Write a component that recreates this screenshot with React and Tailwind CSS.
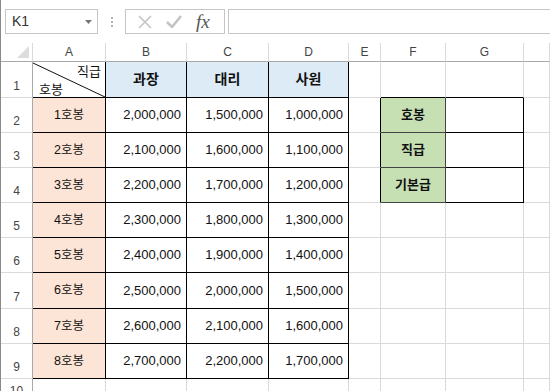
import React from "react";

const F = { fontFamily: '"Liberation Sans", "Noto Sans CJK KR", sans-serif' };

const cols = ["A", "B", "C", "D", "E", "F", "G", ""];
const data = [
  ["1호봉", "2,000,000", "1,500,000", "1,000,000"],
  ["2호봉", "2,100,000", "1,600,000", "1,100,000"],
  ["3호봉", "2,200,000", "1,700,000", "1,200,000"],
  ["4호봉", "2,300,000", "1,800,000", "1,300,000"],
  ["5호봉", "2,400,000", "1,900,000", "1,400,000"],
  ["6호봉", "2,500,000", "2,000,000", "1,500,000"],
  ["7호봉", "2,600,000", "2,100,000", "1,600,000"],
  ["8호봉", "2,700,000", "2,200,000", "1,700,000"],
];
const side = { 1: "호봉", 2: "직급", 3: "기본급" };

function RowHead({ n }) {
  return (
    <div className="border-r border-b border-r-[#a9a9a9] border-b-[#dadada] bg-white flex items-end justify-center pb-[2px] text-[12px] text-[#444]">
      {n}
    </div>
  );
}

function Gap({ cls = "" }) {
  return <div className={"border-r border-b border-[#dadada] " + cls}></div>;
}

export default function App() {
  return (
    <div className="w-[550px] h-[391px] overflow-hidden bg-white border-l border-[#8a8a8a]" style={F}>
      {/* formula bar */}
      <div className="h-[43px] flex items-start pt-[9px]">
        <div className="ml-[4px] w-[93px] h-[25px] border border-[#c6c6c6] flex items-center justify-between pl-[6px] pr-[5px]">
          <span className="text-[14px] text-[#333]">K1</span>
          <svg width="7" height="4" viewBox="0 0 7 4"><path d="M0 0h7L3.5 4z" fill="#777" /></svg>
        </div>
        <div className="w-[27px] h-[25px] flex flex-col items-center justify-center gap-[2px]">
          <span className="w-[2px] h-[2px] bg-[#b0b0b0]"></span>
          <span className="w-[2px] h-[2px] bg-[#b0b0b0]"></span>
          <span className="w-[2px] h-[2px] bg-[#b0b0b0]"></span>
        </div>
        <div className="w-[100px] h-[25px] border border-[#c6c6c6] flex items-center pl-[12px]">
          <svg width="14" height="14" viewBox="0 0 14 14"><path d="M1 1L13 13M13 1L1 13" stroke="#c4c4c4" strokeWidth="1.6" /></svg>
          <svg className="ml-[14px]" width="16" height="13" viewBox="0 0 16 13"><path d="M1 7L6 12L15 1" stroke="#c4c4c4" strokeWidth="2.6" fill="none" /></svg>
          <span className="ml-[14px] text-[19px] italic text-[#555] leading-none" style={{ fontFamily: '"Liberation Serif", serif' }}>fx</span>
        </div>
        <div className="ml-[3px] flex-1 h-[25px] border border-r-0 border-[#c6c6c6]"></div>
      </div>

      {/* sheet */}
      <div
        className="grid grid-cols-[32px_73px_81px_82px_80px_32px_65px_78px_1fr] grid-rows-[19px_36px_35px_35px_35px_35px_35px_36px_35px_35px_35px] text-[13px] text-[#111]"
      >
        {/* column headers */}
        <div className="border-r border-b border-r-[#dadada] border-b-[#a9a9a9] relative">
          <svg className="absolute right-[3px] bottom-[3px]" width="12" height="12" viewBox="0 0 12 12"><path d="M12 0V12H0z" fill="#dcdcdc" /></svg>
        </div>
        {cols.map((c, i) => (
          <div key={i} className="border-r border-b border-r-[#dadada] border-b-[#a9a9a9] flex items-center justify-center text-[12px] text-[#444]">
            {c}
          </div>
        ))}

        {/* row 1 */}
        <RowHead n={1} />
        <div className="border-r border-b border-black relative text-[13px]">
          <svg className="absolute inset-0" width="72" height="35" viewBox="0 0 72 35" preserveAspectRatio="none">
            <line x1="0" y1="1" x2="72" y2="35" stroke="#111" strokeWidth="1" />
          </svg>
          <span className="absolute right-[4px] top-[0px]">직급</span>
          <span className="absolute left-[6px] bottom-[-2px]">호봉</span>
        </div>
        {["과장", "대리", "사원"].map((t) => (
          <div key={t} className="border-r border-b border-black bg-[#ddebf7] flex items-center justify-center font-bold text-[14px]">
            {t}
          </div>
        ))}
        <Gap />
        <div className="border-r border-b border-r-[#dadada] border-b-black"></div>
        <div className="border-r border-b border-r-[#dadada] border-b-black"></div>
        <Gap />

        {data.map((r, i) => (
          <React.Fragment key={i}>
            <RowHead n={i + 2} />
            <div className="border-r border-b border-black bg-[#fce4d6] flex items-center justify-center text-[12.5px]">{r[0]}</div>
            {r.slice(1).map((v, j) => (
              <div key={j} className="border-r border-b border-black flex items-center justify-end pr-[5px]">{v}</div>
            ))}
            {i < 3 ? (
              <>
                <div className="border-r border-b border-r-black border-b-[#dadada]"></div>
                <div className="border-r border-b border-[#444] bg-[#c6e0b4] flex items-center justify-center font-bold text-[13px]">{side[i + 1]}</div>
                <div className="border-r border-b border-black"></div>
              </>
            ) : (
              <>
                <Gap />
                <Gap />
                <Gap />
              </>
            )}
            <Gap />
          </React.Fragment>
        ))}

        {/* row 10 */}
        <div className="border-r border-r-[#a9a9a9] flex items-start justify-center pt-[3px] text-[12px] text-[#444]">10</div>
        <Gap />
        <Gap />
        <Gap />
        <Gap />
        <Gap />
        <Gap />
        <Gap />
        <Gap />
      </div>
    </div>
  );
}
